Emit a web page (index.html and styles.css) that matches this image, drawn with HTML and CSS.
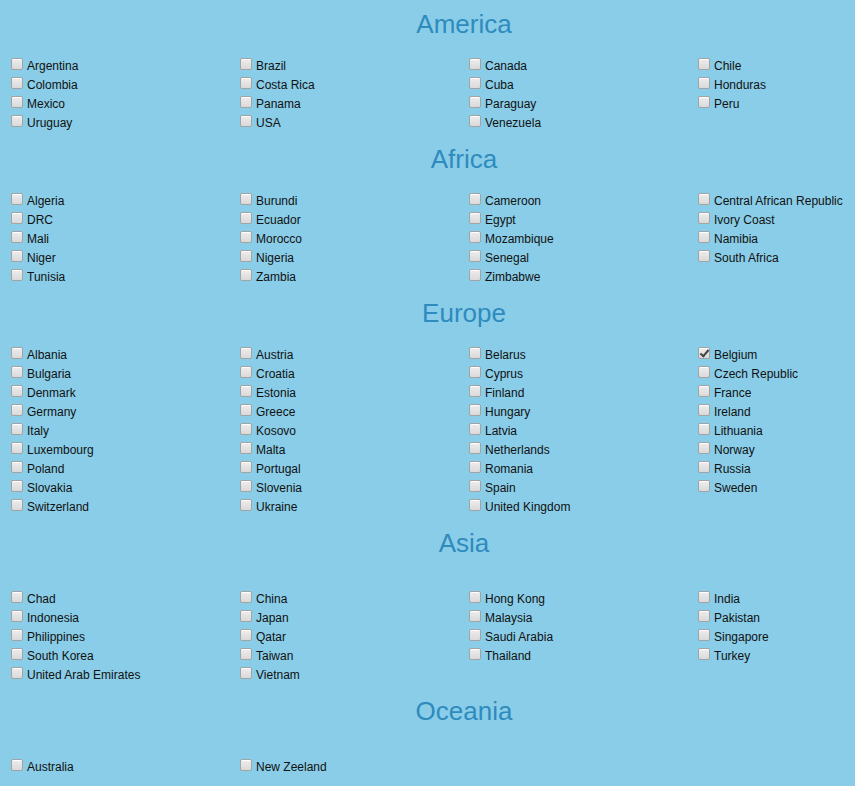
FILE: index.html
```html
<!DOCTYPE html>
<html>
<head>
<meta charset="utf-8">
<link rel="stylesheet" href="styles.css">
</head>
<body>
<div class="page">
  <section class="region">
    <h2 class="title">America</h2>
    <div class="grid">
      <label class="item"><input type="checkbox" class="box"><span>Argentina</span></label>
      <label class="item"><input type="checkbox" class="box"><span>Brazil</span></label>
      <label class="item"><input type="checkbox" class="box"><span>Canada</span></label>
      <label class="item"><input type="checkbox" class="box"><span>Chile</span></label>
      <label class="item"><input type="checkbox" class="box"><span>Colombia</span></label>
      <label class="item"><input type="checkbox" class="box"><span>Costa Rica</span></label>
      <label class="item"><input type="checkbox" class="box"><span>Cuba</span></label>
      <label class="item"><input type="checkbox" class="box"><span>Honduras</span></label>
      <label class="item"><input type="checkbox" class="box"><span>Mexico</span></label>
      <label class="item"><input type="checkbox" class="box"><span>Panama</span></label>
      <label class="item"><input type="checkbox" class="box"><span>Paraguay</span></label>
      <label class="item"><input type="checkbox" class="box"><span>Peru</span></label>
      <label class="item"><input type="checkbox" class="box"><span>Uruguay</span></label>
      <label class="item"><input type="checkbox" class="box"><span>USA</span></label>
      <label class="item"><input type="checkbox" class="box"><span>Venezuela</span></label>
    </div>
  </section>
  <section class="region">
    <h2 class="title">Africa</h2>
    <div class="grid">
      <label class="item"><input type="checkbox" class="box"><span>Algeria</span></label>
      <label class="item"><input type="checkbox" class="box"><span>Burundi</span></label>
      <label class="item"><input type="checkbox" class="box"><span>Cameroon</span></label>
      <label class="item"><input type="checkbox" class="box"><span>Central African Republic</span></label>
      <label class="item"><input type="checkbox" class="box"><span>DRC</span></label>
      <label class="item"><input type="checkbox" class="box"><span>Ecuador</span></label>
      <label class="item"><input type="checkbox" class="box"><span>Egypt</span></label>
      <label class="item"><input type="checkbox" class="box"><span>Ivory Coast</span></label>
      <label class="item"><input type="checkbox" class="box"><span>Mali</span></label>
      <label class="item"><input type="checkbox" class="box"><span>Morocco</span></label>
      <label class="item"><input type="checkbox" class="box"><span>Mozambique</span></label>
      <label class="item"><input type="checkbox" class="box"><span>Namibia</span></label>
      <label class="item"><input type="checkbox" class="box"><span>Niger</span></label>
      <label class="item"><input type="checkbox" class="box"><span>Nigeria</span></label>
      <label class="item"><input type="checkbox" class="box"><span>Senegal</span></label>
      <label class="item"><input type="checkbox" class="box"><span>South Africa</span></label>
      <label class="item"><input type="checkbox" class="box"><span>Tunisia</span></label>
      <label class="item"><input type="checkbox" class="box"><span>Zambia</span></label>
      <label class="item"><input type="checkbox" class="box"><span>Zimbabwe</span></label>
    </div>
  </section>
  <section class="region">
    <h2 class="title">Europe</h2>
    <div class="grid">
      <label class="item"><input type="checkbox" class="box"><span>Albania</span></label>
      <label class="item"><input type="checkbox" class="box"><span>Austria</span></label>
      <label class="item"><input type="checkbox" class="box"><span>Belarus</span></label>
      <label class="item"><input type="checkbox" class="box" checked><span>Belgium</span></label>
      <label class="item"><input type="checkbox" class="box"><span>Bulgaria</span></label>
      <label class="item"><input type="checkbox" class="box"><span>Croatia</span></label>
      <label class="item"><input type="checkbox" class="box"><span>Cyprus</span></label>
      <label class="item"><input type="checkbox" class="box"><span>Czech Republic</span></label>
      <label class="item"><input type="checkbox" class="box"><span>Denmark</span></label>
      <label class="item"><input type="checkbox" class="box"><span>Estonia</span></label>
      <label class="item"><input type="checkbox" class="box"><span>Finland</span></label>
      <label class="item"><input type="checkbox" class="box"><span>France</span></label>
      <label class="item"><input type="checkbox" class="box"><span>Germany</span></label>
      <label class="item"><input type="checkbox" class="box"><span>Greece</span></label>
      <label class="item"><input type="checkbox" class="box"><span>Hungary</span></label>
      <label class="item"><input type="checkbox" class="box"><span>Ireland</span></label>
      <label class="item"><input type="checkbox" class="box"><span>Italy</span></label>
      <label class="item"><input type="checkbox" class="box"><span>Kosovo</span></label>
      <label class="item"><input type="checkbox" class="box"><span>Latvia</span></label>
      <label class="item"><input type="checkbox" class="box"><span>Lithuania</span></label>
      <label class="item"><input type="checkbox" class="box"><span>Luxembourg</span></label>
      <label class="item"><input type="checkbox" class="box"><span>Malta</span></label>
      <label class="item"><input type="checkbox" class="box"><span>Netherlands</span></label>
      <label class="item"><input type="checkbox" class="box"><span>Norway</span></label>
      <label class="item"><input type="checkbox" class="box"><span>Poland</span></label>
      <label class="item"><input type="checkbox" class="box"><span>Portugal</span></label>
      <label class="item"><input type="checkbox" class="box"><span>Romania</span></label>
      <label class="item"><input type="checkbox" class="box"><span>Russia</span></label>
      <label class="item"><input type="checkbox" class="box"><span>Slovakia</span></label>
      <label class="item"><input type="checkbox" class="box"><span>Slovenia</span></label>
      <label class="item"><input type="checkbox" class="box"><span>Spain</span></label>
      <label class="item"><input type="checkbox" class="box"><span>Sweden</span></label>
      <label class="item"><input type="checkbox" class="box"><span>Switzerland</span></label>
      <label class="item"><input type="checkbox" class="box"><span>Ukraine</span></label>
      <label class="item"><input type="checkbox" class="box"><span>United Kingdom</span></label>
    </div>
  </section>
  <section class="region region-wide">
    <h2 class="title">Asia</h2>
    <div class="grid">
      <label class="item"><input type="checkbox" class="box"><span>Chad</span></label>
      <label class="item"><input type="checkbox" class="box"><span>China</span></label>
      <label class="item"><input type="checkbox" class="box"><span>Hong Kong</span></label>
      <label class="item"><input type="checkbox" class="box"><span>India</span></label>
      <label class="item"><input type="checkbox" class="box"><span>Indonesia</span></label>
      <label class="item"><input type="checkbox" class="box"><span>Japan</span></label>
      <label class="item"><input type="checkbox" class="box"><span>Malaysia</span></label>
      <label class="item"><input type="checkbox" class="box"><span>Pakistan</span></label>
      <label class="item"><input type="checkbox" class="box"><span>Philippines</span></label>
      <label class="item"><input type="checkbox" class="box"><span>Qatar</span></label>
      <label class="item"><input type="checkbox" class="box"><span>Saudi Arabia</span></label>
      <label class="item"><input type="checkbox" class="box"><span>Singapore</span></label>
      <label class="item"><input type="checkbox" class="box"><span>South Korea</span></label>
      <label class="item"><input type="checkbox" class="box"><span>Taiwan</span></label>
      <label class="item"><input type="checkbox" class="box"><span>Thailand</span></label>
      <label class="item"><input type="checkbox" class="box"><span>Turkey</span></label>
      <label class="item"><input type="checkbox" class="box"><span>United Arab Emirates</span></label>
      <label class="item"><input type="checkbox" class="box"><span>Vietnam</span></label>
    </div>
  </section>
  <section class="region region-wide">
    <h2 class="title">Oceania</h2>
    <div class="grid">
      <label class="item"><input type="checkbox" class="box"><span>Australia</span></label>
      <label class="item"><input type="checkbox" class="box"><span>New Zeeland</span></label>
    </div>
  </section>
</div>
</body>
</html>
```

FILE: styles.css
```css
html, body {
  margin: 0;
  padding: 0;
}
body {
  background: #8acde8;
  font-family: "Liberation Sans", Arial, sans-serif;
  color: #111;
}
.page {
  width: 847px;
  margin-left: 8px;
  padding-top: 9px;
  display: flex;
  flex-direction: column;
  gap: 11px;
}
.title {
  margin: 0 0 18px;
  padding-left: 65px;
  font-size: 26px;
  line-height: 30px;
  font-weight: normal;
  text-align: center;
  color: #2e8bbd;
}
.region-wide .title {
  margin-bottom: 32px;
}
.grid {
  display: grid;
  grid-template-columns: 229px 229px 229px 1fr;
  padding-left: 3px;
}
.item {
  display: flex;
  align-items: flex-start;
  height: 19px;
  font-size: 12px;
  line-height: 19px;
  white-space: nowrap;
  min-width: 0;
}
.item span {
  display: block;
}
.box {
  appearance: none;
  -webkit-appearance: none;
  width: 12px;
  height: 12px;
  margin: 1px 4px 0 0;
  padding: 0;
  border: 1px solid #a3a3a3;
  border-radius: 2px;
  background: linear-gradient(#ededed, #dadada);
  box-shadow: inset 0 1px 0 #fff;
  flex: none;
  position: relative;
}
.box:checked::after {
  content: "";
  position: absolute;
  left: 3px;
  top: 0px;
  width: 3px;
  height: 7px;
  border: solid #444;
  border-width: 0 2px 2px 0;
  transform: rotate(40deg);
}
```
